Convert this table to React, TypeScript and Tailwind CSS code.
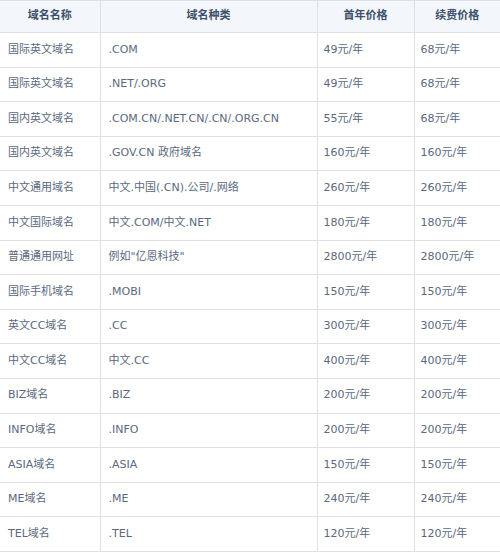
const ROWS: [string, string, string, string][] = [
  ["国际英文域名", ".COM", "49元/年", "68元/年"],
  ["国际英文域名", ".NET/.ORG", "49元/年", "68元/年"],
  ["国内英文域名", ".COM.CN/.NET.CN/.CN/.ORG.CN", "55元/年", "68元/年"],
  ["国内英文域名", ".GOV.CN 政府域名", "160元/年", "160元/年"],
  ["中文通用域名", "中文.中国(.CN).公司/.网络", "260元/年", "260元/年"],
  ["中文国际域名", "中文.COM/中文.NET", "180元/年", "180元/年"],
  ["普通通用网址", "例如\"亿恩科技\"", "2800元/年", "2800元/年"],
  ["国际手机域名", ".MOBI", "150元/年", "150元/年"],
  ["英文CC域名", ".CC", "300元/年", "300元/年"],
  ["中文CC域名", "中文.CC", "400元/年", "400元/年"],
  ["BIZ域名", ".BIZ", "200元/年", "200元/年"],
  ["INFO域名", ".INFO", "200元/年", "200元/年"],
  ["ASIA域名", ".ASIA", "150元/年", "150元/年"],
  ["ME域名", ".ME", "240元/年", "240元/年"],
  ["TEL域名", ".TEL", "120元/年", "120元/年"],
]

export default function App() {
  return (
    <div
      className="w-[500px] h-[554px] bg-white overflow-hidden"
      style={{ fontFamily: '"DejaVu Sans", "Noto Sans CJK SC", sans-serif' }}
    >
      <table className="w-[500px] border-collapse table-fixed text-[11px] text-[#5a6980]">
        <colgroup>
          <col className="w-[100px]" />
          <col className="w-[217px]" />
          <col className="w-[97px]" />
          <col className="w-[86px]" />
        </colgroup>
        <thead>
          <tr className="h-[32px] bg-[#f3f6fa] text-[#3e506b]">
            <th className="border border-[#dde0e4] border-l-0 font-bold">域名名称</th>
            <th className="border border-[#dde0e4] font-bold">域名种类</th>
            <th className="border border-[#dde0e4] font-bold">首年价格</th>
            <th className="border border-[#dde0e4] border-r-0 font-bold">续费价格</th>
          </tr>
        </thead>
        <tbody>
          {ROWS.map((r, i) => (
            <tr key={i} className="h-[34.6px]">
              <td className="border border-[#dde0e4] border-l-0 pl-2">{r[0]}</td>
              <td className="border border-[#dde0e4] pl-2">{r[1]}</td>
              <td className="border border-[#dde0e4] pl-[6px]">{r[2]}</td>
              <td className="border border-[#dde0e4] border-r-0 pl-[6px]">{r[3]}</td>
            </tr>
          ))}
        </tbody>
      </table>
    </div>
  )
}
